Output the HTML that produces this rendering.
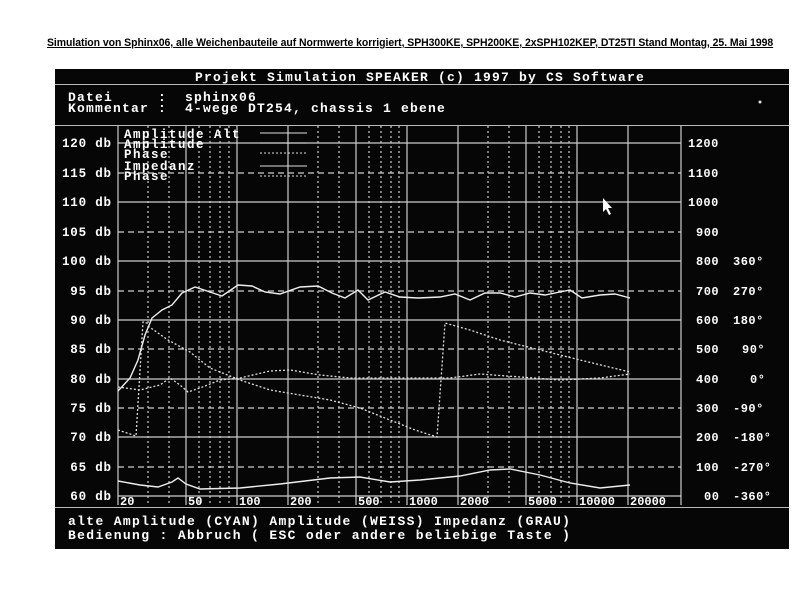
<!DOCTYPE html>
<html><head><meta charset="utf-8"><style>
body{margin:0;background:#fff;width:800px;height:606px;overflow:hidden;font-family:"Liberation Sans",sans-serif}
.t{position:absolute;left:47px;top:37px;font-size:11px;text-decoration:underline;color:#000;letter-spacing:-0.05px;font-weight:bold;transform:scaleX(0.951);transform-origin:0 0;white-space:nowrap}
svg{position:absolute;left:0;top:0}
text{font-family:"Liberation Mono",monospace;font-weight:bold;fill:#fff;white-space:pre}
</style></head><body>
<div class="t">Simulation von Sphinx06, alle Weichenbauteile auf Normwerte korrigiert, SPH300KE, SPH200KE, 2xSPH102KEP, DT25TI Stand Montag, 25. Mai 1998</div>
<svg width="800" height="606" viewBox="0 0 800 606" xml:space="preserve">
<rect x="55" y="69" width="734" height="480" fill="#060606"/>
<text x="420" y="81" font-size="13" text-anchor="middle" letter-spacing="1.2">Projekt Simulation SPEAKER (c) 1997 by CS Software</text>
<line x1="55" y1="84.5" x2="789" y2="84.5" stroke="#bbb"/>
<text x="68" y="101" font-size="13" letter-spacing="1.2">Datei     :  sphinx06</text>
<text x="68" y="112" font-size="13" letter-spacing="1.2">Kommentar :  4-wege DT254, chassis 1 ebene</text>
<line x1="55" y1="125.5" x2="789" y2="125.5" stroke="#bbb"/>
<line x1="55" y1="507.5" x2="789" y2="507.5" stroke="#bbb"/>
<circle cx="760" cy="102" r="1.5" fill="#ddd"/>
<g stroke="#ccc" stroke-width="1.2">
<path d="M118 126V505M186 126V505M237 126V505M288 126V505M356 126V505M407 126V505M458 126V505M526 126V505M577 126V505M628 126V505M681 126V505"/>
<path d="M118 143H681M118 202H681M118 261H681M118 320H681M118 379H681M118 437H681M118 496H681"/>
</g>
<g stroke="#ccc" stroke-width="1.2" stroke-dasharray="2 3">
<path d="M148 126V505M169 126V505M199 126V505M210 126V505M220 126V505M229 126V505M318 126V505M339 126V505M369 126V505M381 126V505M391 126V505M399 126V505M488 126V505M509 126V505M539 126V505M551 126V505M561 126V505M569 126V505"/>
</g>
<g stroke="#ccc" stroke-width="1.2" stroke-dasharray="6 4">
<path d="M118 173H681M118 232H681M118 291H681M118 349H681M118 408H681M118 467H681"/>
</g>
<g fill="none" stroke="#eee" stroke-width="1.4">
<polyline points="118,391 130,378 138,360 145,335 152,318 162,310 172,305 182,293 195,287 210,292 222,296 238,285 252,286 265,292 280,294 300,287 318,286 332,293 345,298 358,290 368,300 385,292 400,297 418,298 440,297 455,294 470,300 485,293 500,293 515,297 530,293 545,295 560,292 570,290 582,298 600,295 615,294 630,298"/>
<polyline points="118,481 140,485 158,487 172,482 178,478 186,484 200,489 240,488 280,484 330,478 360,477 390,482 420,480 460,476 490,470 510,469 540,475 570,483 600,488 630,485"/>
</g>
<g fill="none" stroke="#ddd" stroke-width="1.3" stroke-dasharray="2 2">
<polyline points="118,430 136,436 143,322 150,324"/>
<polyline points="148,326 168,340 190,352 210,368 240,380 270,390 300,395 330,400 360,408 390,420 415,430 437,437 445,323 470,330 500,340 540,350 580,360 630,372"/>
<polyline points="118,387 140,390 160,385 170,378 180,385 188,392 200,388 220,380 240,378 270,371 290,370 320,375 350,378 400,378 450,378 480,374 520,377 560,380 600,378 630,374"/>
</g>
<g font-size="12.5" fill="#fff" letter-spacing="0.8">
<text x="62" y="147">120 db</text><text x="62" y="177">115 db</text><text x="62" y="206">110 db</text>
<text x="62" y="236">105 db</text><text x="62" y="265">100 db</text><text x="62" y="295"> 95 db</text>
<text x="62" y="324"> 90 db</text><text x="62" y="353"> 85 db</text><text x="62" y="383"> 80 db</text>
<text x="62" y="412"> 75 db</text><text x="62" y="441"> 70 db</text><text x="62" y="471"> 65 db</text>
<text x="62" y="500"> 60 db</text>
</g>
<g font-size="12" fill="#ddd" letter-spacing="0.5">
<text x="688" y="147">1200</text><text x="688" y="177">1100</text><text x="688" y="206">1000</text>
<text x="696" y="236">900</text><text x="696" y="265">800</text><text x="696" y="295">700</text>
<text x="696" y="324">600</text><text x="696" y="353">500</text><text x="696" y="383">400</text>
<text x="696" y="412">300</text><text x="696" y="441">200</text><text x="696" y="471">100</text>
<text x="704" y="500">00</text>
<text x="733" y="265">360°</text><text x="733" y="295">270°</text><text x="733" y="324">180°</text>
<text x="742" y="353">90°</text><text x="750" y="383">0°</text><text x="733" y="412">-90°</text>
<text x="733" y="441">-180°</text><text x="733" y="471">-270°</text><text x="733" y="500">-360°</text>
</g>
<g font-size="12" fill="#ddd">
<text x="120" y="505">20</text><text x="188" y="505">50</text><text x="239" y="505">100</text>
<text x="290" y="505">200</text><text x="358" y="505">500</text><text x="409" y="505">1000</text>
<text x="460" y="505">2000</text><text x="528" y="505">5000</text><text x="579" y="505">10000</text>
<text x="630" y="505">20000</text>
</g>
<g font-size="12.5" letter-spacing="1.5">
<text x="124" y="138" fill="#888">Amplitude Alt</text>
<text x="124" y="148">Amplitude</text>
<text x="124" y="158">Phase</text>
<text x="124" y="170" fill="#bbb">Impedanz</text>
<text x="124" y="180" fill="#888">Phase</text>
</g>
<g stroke="#ddd" fill="none">
<path d="M260 133H307M260 143H307M260 166H307"/>
<path d="M260 153H307M260 176H307" stroke-dasharray="2 2"/>
</g>
<path d="M603 198l0 14 3-3 3 6 2-1-3-6 4 0z" fill="#fff"/>
<text x="68" y="525" font-size="13" letter-spacing="1.35">alte Amplitude (CYAN) Amplitude (WEISS) Impedanz (GRAU)</text>
<text x="68" y="539" font-size="13" letter-spacing="1.35">Bedienung : Abbruch ( ESC oder andere beliebige Taste )</text>
</svg>
</body></html>
